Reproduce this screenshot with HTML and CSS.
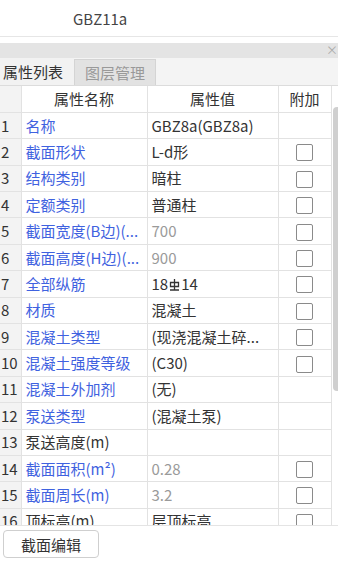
FILE: index.html
```html
<!DOCTYPE html>
<html lang="zh">
<head>
<meta charset="utf-8">
<link rel="stylesheet" href="styles.css">
</head>
<body>
<div class="title">GBZ11a</div>
<div class="sep"></div>
<div class="graybar"><span class="close">×</span></div>
<div class="tabs">
  <div class="tab active">属性列表</div>
  <div class="tab">图层管理</div>
</div>
<div class="grid-wrap">
  <table class="grid">
    <colgroup><col class="c-num"><col class="c-name"><col class="c-val"><col class="c-add"></colgroup>
    <thead>
      <tr><th class="num"></th><th>属性名称</th><th>属性值</th><th>附加</th></tr>
    </thead>
    <tbody>
      <tr><td class="num">1</td><td class="name">名称</td><td>GBZ8a(GBZ8a)</td><td></td></tr>
      <tr><td class="num">2</td><td class="name">截面形状</td><td>L-d形</td><td><span class="cb"></span></td></tr>
      <tr><td class="num">3</td><td class="name">结构类别</td><td>暗柱</td><td><span class="cb"></span></td></tr>
      <tr><td class="num">4</td><td class="name">定额类别</td><td>普通柱</td><td><span class="cb"></span></td></tr>
      <tr><td class="num">5</td><td class="name">截面宽度(B边)(...</td><td class="muted">700</td><td><span class="cb"></span></td></tr>
      <tr><td class="num">6</td><td class="name">截面高度(H边)(...</td><td class="muted">900</td><td><span class="cb"></span></td></tr>
      <tr><td class="num">7</td><td class="name">全部纵筋</td><td>18<svg class="rebar" width="11" height="15" viewBox="0 0 11 15"><path d="M5.5 2v11M1.5 5.5h8v4h-8zM1 13h9" fill="none" stroke="#333" stroke-width="1.3"/></svg>14</td><td><span class="cb"></span></td></tr>
      <tr><td class="num">8</td><td class="name">材质</td><td>混凝土</td><td><span class="cb"></span></td></tr>
      <tr><td class="num">9</td><td class="name">混凝土类型</td><td>(现浇混凝土碎...</td><td><span class="cb"></span></td></tr>
      <tr><td class="num">10</td><td class="name">混凝土强度等级</td><td>(C30)</td><td><span class="cb"></span></td></tr>
      <tr><td class="num">11</td><td class="name">混凝土外加剂</td><td>(无)</td><td></td></tr>
      <tr><td class="num">12</td><td class="name">泵送类型</td><td>(混凝土泵)</td><td></td></tr>
      <tr><td class="num">13</td><td class="plain">泵送高度(m)</td><td></td><td></td></tr>
      <tr><td class="num">14</td><td class="name">截面面积(m²)</td><td class="muted">0.28</td><td><span class="cb"></span></td></tr>
      <tr><td class="num">15</td><td class="name">截面周长(m)</td><td class="muted">3.2</td><td><span class="cb"></span></td></tr>
      <tr><td class="num">16</td><td class="plain">顶标高(m)</td><td>层顶标高</td><td><span class="cb"></span></td></tr>
    </tbody>
  </table>
  <div class="thumb"></div>
</div>
<div class="footer">
  <button class="btn">截面编辑</button>
</div>
</body>
</html>
```

FILE: styles.css
```css
* { box-sizing: border-box; }
html, body { margin: 0; padding: 0; background: #fff; }
body {
  width: 338px;
  height: 561px;
  overflow: hidden;
  font-family: "Noto Sans CJK SC", "Noto Sans", sans-serif;
  font-size: 15px;
  color: #333;
}
.title {
  height: 36px;
  padding-left: 73px;
  padding-top: 9px;
  line-height: 20px;
  color: #444;
}
.sep { height: 1px; background: #e6e6e6; margin-bottom: 6px; }
.graybar {
  height: 15px;
  background: #e4e4e4;
  position: relative;
  overflow: hidden;
}
.close {
  position: absolute;
  right: 0;
  top: -3px;
  font-size: 12px;
  line-height: 20px;
  color: #aaa;
}
.tabs {
  display: flex;
  height: 28px;
  background: #f4f4f4;
  border-bottom: 1px solid #dcdcdc;
}
.tab {
  padding: 0 3px;
  line-height: 26px;
  color: #999;
  background: #e2e2e2;
  border: 1px solid #d4d4d4;
  border-bottom: none;
  margin-top: 1px;
  width: 82px;
  text-align: center;
}
.tab.active {
  color: #333;
  background: #f2f2f2;
  border: none;
  width: 74px;
  text-align: left;
  margin-top: 0;
  line-height: 27px;
}
.grid-wrap {
  position: relative;
  height: 440px;
  overflow: hidden;
  border-bottom: 1px solid #e4e4e4;
}
.grid {
  border-collapse: collapse;
  table-layout: fixed;
  width: 331px;
}
.c-num { width: 21px; }
.c-name { width: 126px; }
.c-val { width: 131px; }
.c-add { width: 53px; }
.grid th, .grid td {
  height: 26.4px;
  padding: 0 0 0 4px;
  border: 1px solid #e2e2e2;
  white-space: nowrap;
  overflow: hidden;
  font-weight: normal;
  line-height: 24px;
}
.grid tr:first-child th { border-top: none; }
.grid th:first-child, .grid td:first-child { border-left: none; }
.grid th { text-align: center; padding: 0; color: #333; }
.grid td.num {
  background: #f3f3f3;
  padding: 0 0 0 1px;
  color: #333;
}
.grid th.num { background: #f3f3f3; }
.grid td.name { color: #3f62e0; }
.grid td.plain { color: #333; }
.grid td.muted { color: #9a9a9a; }
.grid td:last-child { text-align: center; padding: 0; }
.cb {
  display: inline-block;
  width: 17px;
  height: 17px;
  border: 1px solid #8a8a8a;
  border-radius: 2px;
  vertical-align: middle;
  margin-top: -2px;
  background: #fff;
}
.rebar { vertical-align: -2px; margin: 0 1px; }
.thumb {
  position: absolute;
  left: 333px;
  top: 21px;
  width: 8px;
  height: 284px;
  background: #cfcfcf;
  border-radius: 4px;
}
.footer { padding: 4px 0 0 3px; }
.btn {
  width: 96px;
  height: 28px;
  border: 1px solid #cfcfcf;
  border-radius: 4px;
  background: #fff;
  font-family: "Noto Sans CJK SC", "Noto Sans", sans-serif;
  font-size: 15px;
  color: #333;
  padding: 0;
}
```
